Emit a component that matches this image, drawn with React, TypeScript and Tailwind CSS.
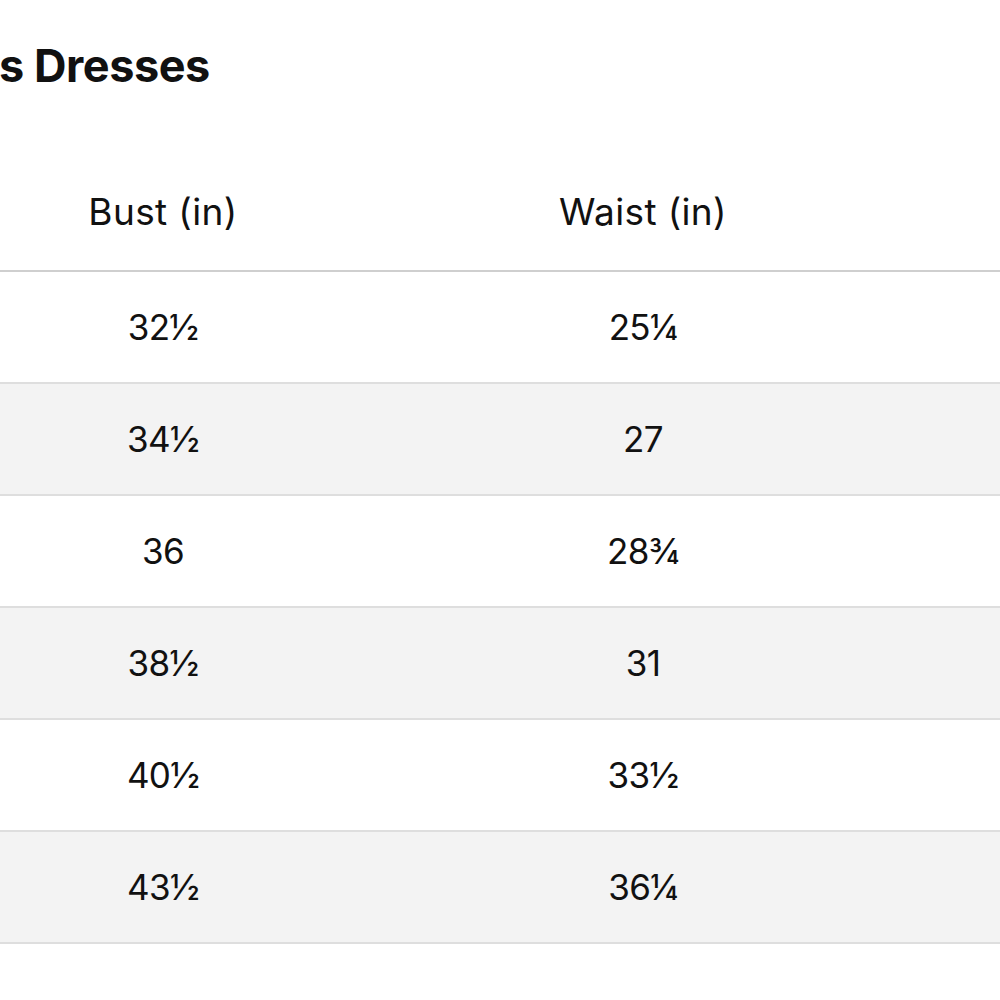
const rows = [
  { bust: "32½", waist: "25¼" },
  { bust: "34½", waist: "27" },
  { bust: "36", waist: "28¾" },
  { bust: "38½", waist: "31" },
  { bust: "40½", waist: "33½" },
  { bust: "43½", waist: "36¼" },
];

const App = () => {
  return (
    <div className="w-[1000px] h-[1000px] overflow-hidden bg-white text-[#111] font-['Inter',sans-serif]">
      {/* Title */}
      <div className="h-[154px] pt-[38px]">
        <h2 className="text-[45px] leading-[56px] font-bold tracking-[-0.01em] -ml-[1px]">
          s Dresses
        </h2>
      </div>
      {/* Size table: Bust and Waist columns, outer columns run past the view */}
      <div className="-ml-[77px] w-[1077px]">
        <div className="grid grid-cols-[480px_480px_117px] h-[118px] items-center border-b-2 border-[#cfcfcf] text-[37px] tracking-[0.01em] text-center">
          <div>Bust (in)</div>
          <div>Waist (in)</div>
          <div />
        </div>
        {rows.map((r, i) => (
          <div
            key={r.bust}
            className={`grid grid-cols-[480px_480px_117px] h-[112px] items-center border-b-2 border-[#dedede] text-[35px] tracking-[-0.02em] text-center ${
              i % 2 === 1 ? "bg-[#f3f3f3]" : "bg-white"
            }`}
          >
            <div>{r.bust}</div>
            <div>{r.waist}</div>
            <div />
          </div>
        ))}
      </div>
    </div>
  );
};

export default App;
